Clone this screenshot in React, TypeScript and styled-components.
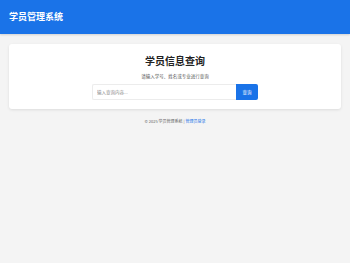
import { createGlobalStyle, styled } from "styled-components";

const GlobalStyle = createGlobalStyle`
    html, body {
        margin: 0;
        padding: 0;
        background: #f4f4f4;
        font-family: "Noto Sans CJK SC", "Noto Sans", sans-serif;
    }
`

const Header = styled.header`
    height: 34px;
    box-sizing: border-box;
    background: #1a73e8;
    display: flex;
    align-items: center;
    padding: 0 9px;
    box-shadow: 0 1px 2px rgba(0, 0, 0, 0.15);
`

const Brand = styled.h1`
    margin: 0;
    font-size: 9px;
    line-height: 12px;
    font-weight: 700;
    color: #ffffff;
`

const Main = styled.main`
    padding: 10px 9px 0;
`

const Card = styled.section`
    background: #ffffff;
    border-radius: 3px;
    box-shadow: 0 1px 3px rgba(0, 0, 0, 0.1);
    padding: 10px 9px 9px;
    text-align: center;
`

const Title = styled.h2`
    margin: 0 0 6px;
    font-size: 10px;
    line-height: 13px;
    font-weight: 700;
    color: #222222;
`

const Hint = styled.p`
    margin: 0 0 4px;
    font-size: 4.5px;
    line-height: 7px;
    color: #555555;
`

const SearchRow = styled.form`
    display: flex;
    max-width: 166px;
    margin: 0 auto;
    height: 16px;
`

const Input = styled.input`
    flex: 1;
    min-width: 0;
    box-sizing: border-box;
    border: 1px solid #ececec;
    border-right: none;
    border-radius: 2px 0 0 2px;
    padding: 0 4px;
    font-family: inherit;
    font-size: 4.5px;
    color: #333333;
    outline: none;

    &::placeholder {
        color: #8a8a8a;
    }
`

const Button = styled.button`
    width: 22px;
    border: none;
    border-radius: 0 2px 2px 0;
    background: #1a73e8;
    color: #ffffff;
    font-family: inherit;
    font-size: 4.5px;
    padding: 0;
`

const Footer = styled.footer`
    margin-top: 9px;
    text-align: center;
    font-size: 4px;
    line-height: 6px;
    color: #666666;
`

const FooterLink = styled.a`
    color: #1a73e8;
    text-decoration: none;
`

export default function App() {
    return (
        <>
            <GlobalStyle />
            <Header>
                <Brand>学员管理系统</Brand>
            </Header>
            <Main>
                <Card>
                    <Title>学员信息查询</Title>
                    <Hint>请输入学号、姓名或专业进行查询</Hint>
                    <SearchRow onSubmit={(e) => e.preventDefault()}>
                        <Input type="text" placeholder="输入查询内容..." />
                        <Button type="submit">查询</Button>
                    </SearchRow>
                </Card>
                <Footer>
                    © 2025 学员管理系统 | <FooterLink href="#">管理员登录</FooterLink>
                </Footer>
            </Main>
        </>
    )
}
